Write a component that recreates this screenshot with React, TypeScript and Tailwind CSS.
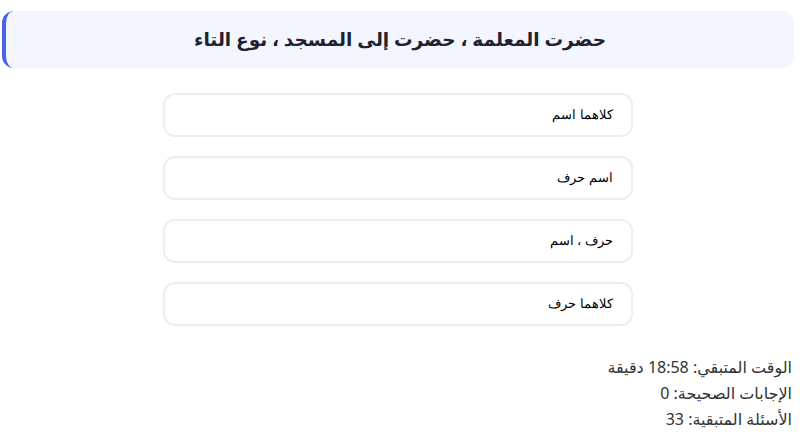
import React from "react";

const options = ["كلاهما اسم", "اسم حرف", "حرف ، اسم", "كلاهما حرف"];

export default function App() {
  return (
    <div dir="rtl" className="w-[800px] h-[445px] bg-white overflow-hidden" style={{ fontFamily: '"Noto Sans", "DejaVu Sans", sans-serif' }}>
      <div className="pt-[11px] pl-[2px] pr-[6px]">
        <div className="h-[57px] rounded-[12px] bg-[#f3f6ff] border-l-4 border-[#4a63e8] flex items-center justify-center">
          <h2 className="text-[18.5px] font-bold text-[#1f2230] leading-none" style={{ fontFamily: '"Noto Sans", "DejaVu Sans", sans-serif' }}>
            حضرت المعلمة ، حضرت إلى المسجد ، نوع التاء
          </h2>
        </div>
        <div className="mt-[25px] flex flex-col items-center gap-[19px]">
          {options.map((o) => (
            <div
              key={o}
              className="w-[470px] h-[44px] rounded-[12px] border-2 border-[#eceef2] bg-white flex items-center pr-[18px] text-[13px] text-black"
              style={{ fontFamily: '"Liberation Sans", Arial, sans-serif' }}
            >
              {o}
            </div>
          ))}
        </div>
        <div className="mt-[28px] pr-[2px] flex flex-col text-[16px] text-[#333] leading-[26px]">
          <div>الوقت المتبقي: 18:58 دقيقة</div>
          <div>الإجابات الصحيحة: 0</div>
          <div>الأسئلة المتبقية: 33</div>
        </div>
      </div>
    </div>
  );
}
